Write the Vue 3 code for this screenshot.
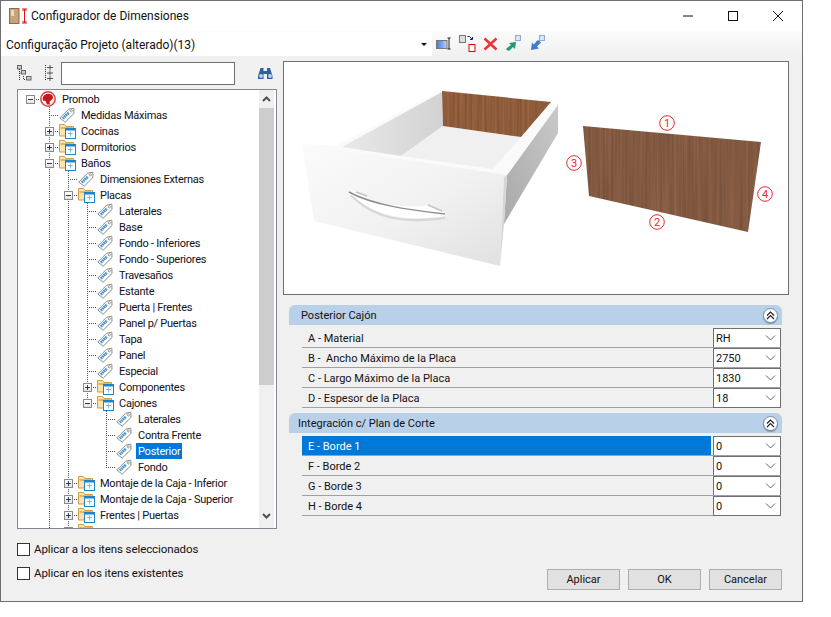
<template>
  <div class="window">
    <svg class="defs" width="0" height="0" aria-hidden="true">
      <defs>
        <symbol id="tag" viewBox="0 0 16 16">
          <path d="M.8 11 9.600 2.200 14.800 1.200l.2 5.200-8.800 8.800z" fill="#fff" stroke="#8b8b8b" />
          <path d="M3.800 11.600 10 5.400" stroke="#3a92d8" stroke-width="2.800" stroke-dasharray="1.600 .5" fill="none" />
          <circle cx="12.300" cy="3.800" r="1.100" fill="#fff" stroke="#777" stroke-width=".7" />
        </symbol>
        <symbol id="folder" viewBox="0 0 18 16">
          <path d="M.5 13V1.500h5l1.500 2h7.500V13z" fill="#fbe3ac" stroke="#cf9d4c" />
          <path d="M1.500 5h12" stroke="#e9b45f" stroke-width="2" />
          <rect x="6.500" y="5.500" width="10" height="10" fill="#fff" stroke="#1f83c6" />
          <path d="M6.500 6.500h10" stroke="#1f83c6" stroke-width="2" />
          <path d="M9 10.500h5M11.500 8.500v5" stroke="#8fb9d8" />
        </symbol>
      </defs>
    </svg>

    <header class="titlebar">
      <svg class="app-icon" width="22" height="18" viewBox="0 0 22 18">
        <rect x=".5" y="1.500" width="9.500" height="15" fill="#c6a378" stroke="#8b6a45" />
        <rect x="2" y="3" width="3" height="6" fill="#e7d8c2" />
        <path d="M15.500 2v14M13 2h5M13 16h5M13.500 4l2-2 2 2M13.500 14l2 2 2-2" stroke="#e0141e" fill="none" />
      </svg>
      <span class="titlebar__text">Configurador de Dimensiones</span>
      <div class="titlebar__controls">
        <svg width="12" height="12" viewBox="0 0 12 12"><path d="M1 6h10" stroke="#111" /></svg>
        <svg width="12" height="12" viewBox="0 0 12 12"><rect x="1.500" y="1.500" width="9" height="9" fill="none" stroke="#111" /></svg>
        <svg width="12" height="12" viewBox="0 0 12 12"><path d="M1 1l10 10M11 1 1 11" stroke="#111" /></svg>
      </div>
    </header>

    <div class="toolbar">
      <div class="combo">
        <span>Configuração Projeto (alterado)(13)</span>
        <i class="combo__arrow"></i>
      </div>
      <div class="toolbar__icons">
        <svg width="16" height="16" viewBox="0 0 16 16">
          <defs>
            <linearGradient id="tb-blue" x1="0" x2="1"><stop offset="0" stop-color="#3d78e0" /><stop offset="1" stop-color="#bcd2f4" /></linearGradient>
          </defs>
          <rect x=".5" y="4.500" width="10.500" height="8" fill="url(#tb-blue)" stroke="#777" />
          <path d="M11.500 2h3M11.500 13h3M13 2v11" stroke="#222" fill="none" />
        </svg>
        <svg width="17" height="18" viewBox="0 0 17 18">
          <rect x=".5" y=".5" width="6" height="7" fill="#ddd" stroke="#777" />
          <path d="M8.500 1.500h2l2.500 2.500M13.500 2v2.500H11" stroke="#14206e" fill="none" />
          <rect x="10" y="9.500" width="6" height="7" fill="#fff" stroke="#e60000" />
        </svg>
        <svg width="15" height="14" viewBox="0 0 15 14"><path d="M1.500 1.500l12 11M13.500 1.500l-12 11" stroke="#ea3438" stroke-width="2.600" /></svg>
        <svg width="17" height="17" viewBox="0 0 17 17">
          <rect x="10.500" y=".5" width="5" height="5" fill="#dbe6f6" stroke="#8fa9d6" />
          <path d="M1 14.500l3 1.500 4-4 2 2 1-7-7 1 2 2-4 3z" fill="#239a6d" />
        </svg>
        <svg width="17" height="17" viewBox="0 0 17 17">
          <rect x="10.500" y=".5" width="5" height="5" fill="#dbe6f6" stroke="#8fa9d6" />
          <path d="M10 5.500l2 2-4 4 2 2-8 1.500 1-7.500 2 2 3-4z" fill="#3d7cd0" />
        </svg>
      </div>
    </div>

    <main class="content">
      <section class="left">
        <div class="searchbar">
          <svg width="15" height="16" viewBox="0 0 15 16">
            <path d="M2.500 4v11M2.500 8H6M6.500 11v3.500h3" stroke="#333" stroke-dasharray="1 1" fill="none" />
            <rect x=".5" y=".5" width="4" height="3.500" fill="#ccc" stroke="#666" />
            <rect x="4.500" y="5.500" width="4" height="3.500" fill="#ccc" stroke="#666" />
            <rect x="9.500" y="11.500" width="4.500" height="3.500" fill="#ccc" stroke="#666" />
          </svg>
          <svg class="searchbar__flat" width="10" height="16" viewBox="0 0 10 16">
            <path d="M1.500 0v16" stroke="#333" stroke-dasharray="1 1" />
            <path d="M3 2.500h6M6 0v5M3 8h6M6 5.500v5M3 13.500h6M6 11v5" stroke="#555" />
          </svg>
          <input class="searchbar__input" type="text" />
          <svg class="searchbar__find" width="17" height="14" viewBox="0 0 17 14">
            <path d="M3.500 2h3v3h3.500V2h3l2.500 8v3h-5.500V8h-3.500v5H1v-3z" fill="#2f619f" />
            <circle cx="4" cy="10" r="2" fill="#b8d0ee" />
            <circle cx="13" cy="10" r="2" fill="#b8d0ee" />
          </svg>
        </div>

        <div class="tree">
          <ul class="tree__rows">
            <li v-for="row in rows" :key="row.key" class="tree__row">
              <span
                v-for="(on, i) in row.guides"
                :key="i"
                class="cell"
                :class="{ 'cell--guide': on }"
              ></span>
              <span class="cell" :class="row.connector">
                <i v-if="row.children" class="toggle" :class="{ 'toggle--plus': !row.open }"></i>
              </span>
              <span class="cell cell--icon">
                <svg v-if="row.icon === 'logo'" width="16" height="16" viewBox="0 0 16 16">
                  <circle cx="8" cy="8" r="7.200" fill="#fff" stroke="#e33b40" stroke-width="1.500" />
                  <path d="M2.500 7.500c.7-3.500 4.500-5.500 8-4.300 2.500.8 3 3 2 4.800-.8 1.300-2.500 1.700-3 3l.5 2.500H7L5.500 10 3 9.500z" fill="#c9161d" />
                </svg>
                <svg v-else-if="row.icon === 'folder'" class="icon-folder" width="18" height="16"><use href="#folder" /></svg>
                <svg v-else width="16" height="16"><use href="#tag" /></svg>
              </span>
              <span v-if="row.label" class="tree__label" :class="{ 'tree__label--selected': row.selected }">{{ row.label }}</span>
            </li>
          </ul>
          <div class="scroll">
            <svg width="15" height="18" viewBox="0 0 15 18"><path d="M4 11l3.500-3.500L11 11" stroke="#505050" stroke-width="2" fill="none" /></svg>
            <div class="scroll__thumb"></div>
            <svg class="scroll__down" width="15" height="18" viewBox="0 0 15 18"><path d="M4 7l3.500 3.500L11 7" stroke="#505050" stroke-width="2" fill="none" /></svg>
          </div>
        </div>

        <label class="check"><input type="checkbox" />Aplicar a los itens seleccionados</label>
        <label class="check check--second"><input type="checkbox" />Aplicar en los itens existentes</label>
      </section>

      <section class="right">
        <div class="preview">
          <svg width="504" height="232" viewBox="284 62 504 232">
            <defs>
              <filter id="wood-back" x="0" y="0" width="100%" height="100%" color-interpolation-filters="sRGB">
                <feTurbulence type="fractalNoise" baseFrequency="0.4 0.008" numOctaves="3" seed="4" />
                <feColorMatrix values="0.18 0 0 0 0.47  0.12 0 0 0 0.3  0.08 0 0 0 0.19  0 0 0 0 1" />
                <feComposite in2="SourceGraphic" operator="in" />
              </filter>
              <filter id="wood-panel" x="0" y="0" width="100%" height="100%" color-interpolation-filters="sRGB">
                <feTurbulence type="fractalNoise" baseFrequency="0.35 0.006" numOctaves="3" seed="9" />
                <feColorMatrix values="0.16 0 0 0 0.43  0.12 0 0 0 0.29  0.09 0 0 0 0.21  0 0 0 0 1" />
                <feComposite in2="SourceGraphic" operator="in" />
              </filter>
              <linearGradient id="front" x1="0" x2="1" y1="0" y2="1">
                <stop offset="0" stop-color="#fbfbfb" />
                <stop offset=".55" stop-color="#f1f1f1" />
                <stop offset="1" stop-color="#e0e0e0" />
              </linearGradient>
              <linearGradient id="inner" x1="0" x2="1">
                <stop offset="0" stop-color="#e9e9e9" />
                <stop offset="1" stop-color="#d2d2d2" />
              </linearGradient>
              <linearGradient id="side" x1="0" x2="1" y1="1" y2="0">
                <stop offset="0" stop-color="#a9a9a9" />
                <stop offset="1" stop-color="#c9c9c9" />
              </linearGradient>
            </defs>

            <path d="M507 175 558 104V133L504 224z" fill="url(#side)" />
            <path d="M336 146 441 90 551 102 558 105 507 175 302 144z" fill="#fafafa" />
            <path d="M342 147 442 92 443 126 401 156z" fill="url(#inner)" />
            <path d="M443 126 521 137 493 169 401 156z" fill="#f0f0f0" />
            <path d="M442 91 551 102 521 137 443 126z" fill="#000" filter="url(#wood-back)" />
            <path d="M302 144 507 175 504 177 500 266 314 221z" fill="url(#front)" />
            <path d="M504 177 507 175 504 224 500 266z" fill="#d5d5d5" />

            <!-- handle: soft shadow, body, then the dark upper edge -->
            <path d="M351 195C376 221 410 223 445 218" stroke="#d8d8d8" stroke-width="2.500" fill="none" />
            <path d="M349 192 356 191 367 196 363 198C385 206 405 207 425 206L428 205 445 213 445 216C410 221 375 219 349 192z" fill="#fff" />
            <path d="M349 192C372 205 410 210 445 214" stroke="#8f8f8f" stroke-width="1.500" fill="none" />
            <path d="M356 192 367 196M428 205 442 211" stroke="#c4c4c4" stroke-width="1.500" />

            <path d="M583 126 761 142 748 232 589 196z" fill="#000" filter="url(#wood-panel)" />

            <g v-for="mark in marks" :key="mark.n">
              <circle :cx="mark.x" :cy="mark.y" r="7.300" fill="#fff" stroke="#ec2b30" />
              <text :x="mark.x" :y="mark.y + 4" class="mark">{{ mark.n }}</text>
            </g>
          </svg>
        </div>

        <div v-for="group in groups" :key="group.title" class="group">
          <div class="group__head">
            <span>{{ group.title }}</span>
            <button class="group__toggle" type="button">
              <svg width="9" height="9" viewBox="0 0 9 9"><path d="M1 4.500l3.500-3.500L8 4.500M1 8l3.500-3.500L8 8" stroke="#222" stroke-width="1.200" fill="none" /></svg>
            </button>
          </div>
          <div v-for="item in group.items" :key="item.label" class="prop">
            <span class="prop__label" :class="{ 'prop__label--selected': item.selected }">{{ item.label }}</span>
            <span class="prop__value">
              {{ item.value }}
              <svg width="11" height="6" viewBox="0 0 11 6"><path d="M1 .5l4.500 4.500L10 .5" stroke="#666" fill="none" /></svg>
            </span>
          </div>
        </div>

        <div class="actions">
          <button type="button">Aplicar</button>
          <button type="button">OK</button>
          <button type="button">Cancelar</button>
        </div>
      </section>
    </main>
  </div>
</template>

<script setup>
import { computed } from 'vue';

const leaf = (label, selected = false) => ({ label, selected });

const tree = [
  {
    label: 'Promob',
    icon: 'logo',
    open: true,
    children: [
      leaf('Medidas Máximas'),
      { label: 'Cocinas', children: [] },
      { label: 'Dormitorios', children: [] },
      {
        label: 'Baños',
        open: true,
        more: true, // has siblings further down, below the visible part of the list
        children: [
          leaf('Dimensiones Externas'),
          {
            label: 'Placas',
            open: true,
            children: [
              leaf('Laterales'),
              leaf('Base'),
              leaf('Fondo - Inferiores'),
              leaf('Fondo - Superiores'),
              leaf('Travesaños'),
              leaf('Estante'),
              leaf('Puerta | Frentes'),
              leaf('Panel p/ Puertas'),
              leaf('Tapa'),
              leaf('Panel'),
              leaf('Especial'),
              { label: 'Componentes', children: [] },
              {
                label: 'Cajones',
                open: true,
                children: [
                  leaf('Laterales'),
                  leaf('Contra Frente'),
                  leaf('Posterior', true),
                  leaf('Fondo'),
                ],
              },
            ],
          },
          { label: 'Montaje de la Caja - Inferior', children: [] },
          { label: 'Montaje de la Caja - Superior', children: [] },
          { label: 'Frentes | Puertas', children: [] },
          { label: '', children: [] }, // only the folder top shows above the list edge
        ],
      },
    ],
  },
];

// flatten the tree so every row knows which guide lines it has to draw
const flatten = (nodes, guides = [], prefix = '') =>
  nodes.flatMap((node, i) => {
    const last = i === nodes.length - 1 && !node.more;
    const key = `${prefix}/${i}`;
    const row = {
      ...node,
      key,
      guides,
      icon: node.icon ?? (node.children ? 'folder' : 'tag'),
      connector: guides.length === 0 ? 'cell--root' : last ? 'cell--end' : 'cell--tee',
    };
    const kids = node.open
      ? flatten(node.children, [...guides, guides.length > 0 && !last], key)
      : [];
    return [row, ...kids];
  });

const rows = computed(() => flatten(tree));

const marks = [
  { n: 1, x: 667, y: 123 },
  { n: 2, x: 657, y: 222 },
  { n: 3, x: 574, y: 163 },
  { n: 4, x: 765, y: 194 },
];

const groups = [
  {
    title: 'Posterior Cajón',
    items: [
      { label: 'A - Material', value: 'RH' },
      { label: 'B -  Ancho Máximo de la Placa', value: '2750' },
      { label: 'C - Largo Máximo de la Placa', value: '1830' },
      { label: 'D - Espesor de la Placa', value: '18' },
    ],
  },
  {
    title: 'Integración c/ Plan de Corte',
    items: [
      { label: 'E - Borde 1', value: '0', selected: true },
      { label: 'F - Borde 2', value: '0' },
      { label: 'G - Borde 3', value: '0' },
      { label: 'H - Borde 4', value: '0' },
    ],
  },
];
</script>

<style scoped>
.window {
  width: 803px;
  height: 602px;
  box-sizing: border-box;
  border: 1px solid #6f6f6f;
  background: #f0f0f0;
  display: flex;
  flex-direction: column;
  font-family: Roboto, 'Liberation Sans', sans-serif;
  font-size: 11px;
  color: #111;
  overflow: hidden;
}

.defs {
  position: absolute;
}

.titlebar {
  height: 30px;
  flex: none;
  background: #fff;
  display: flex;
  align-items: center;
  padding-left: 8px;
}

.titlebar__text {
  font-size: 12px;
}

.titlebar__controls {
  margin-left: auto;
  margin-right: 18px;
  display: flex;
  gap: 33px;
}

.toolbar {
  height: 25px;
  flex: none;
  display: flex;
  align-items: center;
  background: linear-gradient(180deg, #fbfbfb 0%, #f0f0f0 100%);
}

.combo {
  width: 431px;
  height: 24px;
  box-sizing: border-box;
  padding: 2px 5px 0;
  background: #fff;
  display: flex;
  align-items: center;
  justify-content: space-between;
  font-size: 12px;
}

.combo__arrow {
  width: 0;
  height: 0;
  border: 3px solid transparent;
  border-top: 3px solid #111;
  border-bottom: 0;
}

.toolbar__icons {
  margin-left: 4px;
  display: flex;
  align-items: center;
  gap: 7px;
}

.content {
  flex: 1;
  display: flex;
  min-height: 0;
}

.left {
  width: 276px;
  flex: none;
  box-sizing: border-box;
  padding: 5px 0 0 16px;
}

.searchbar {
  height: 24px;
  display: flex;
  align-items: center;
}

.searchbar__flat {
  margin-left: 12px;
}

.searchbar__input {
  width: 174px;
  height: 23px;
  box-sizing: border-box;
  margin-left: 7px;
  border: 1px solid #6f6f6f;
  background: #fff;
  outline: none;
}

.searchbar__find {
  margin-left: 22px;
}

.tree {
  height: 440px;
  box-sizing: border-box;
  margin-top: 4px;
  border: 1px solid #828790;
  background: #fff;
  display: flex;
  overflow: hidden;
}

.tree__rows {
  flex: 1;
  margin: 1px 0 0;
  padding: 0 0 0 3px;
  list-style: none;
  min-width: 0;
}

.tree__row {
  height: 16px;
  display: flex;
  align-items: center;
  white-space: nowrap;
}

.cell {
  width: 19px;
  height: 16px;
  flex: none;
  display: flex;
  align-items: center;
  justify-content: center;
  background-repeat: no-repeat;
}

.cell--guide {
  background-image: repeating-linear-gradient(180deg, #555 0 1px, transparent 1px 2px);
  background-size: 1px 16px;
  background-position: 9px 0;
}

.cell--tee {
  background-image:
    repeating-linear-gradient(180deg, #555 0 1px, transparent 1px 2px),
    repeating-linear-gradient(90deg, #555 0 1px, transparent 1px 2px);
  background-size: 1px 16px, 10px 1px;
  background-position: 9px 0, 9px 8px;
}

.cell--end {
  background-image:
    repeating-linear-gradient(180deg, #555 0 1px, transparent 1px 2px),
    repeating-linear-gradient(90deg, #555 0 1px, transparent 1px 2px);
  background-size: 1px 8px, 10px 1px;
  background-position: 9px 0, 9px 8px;
}

.cell--root {
  background-image: repeating-linear-gradient(90deg, #555 0 1px, transparent 1px 2px);
  background-size: 10px 1px;
  background-position: 9px 8px;
}

.cell--icon {
  justify-content: flex-start;
}

.icon-folder {
  overflow: visible;
}

.toggle {
  width: 9px;
  height: 9px;
  box-sizing: border-box;
  border: 1px solid #8a8a8a;
  background:
    linear-gradient(#2b3a55, #2b3a55) center / 5px 1px no-repeat,
    linear-gradient(180deg, #fff, #e2e2e2);
}

.toggle--plus {
  background:
    linear-gradient(#2b3a55, #2b3a55) center / 5px 1px no-repeat,
    linear-gradient(#2b3a55, #2b3a55) center / 1px 5px no-repeat,
    linear-gradient(180deg, #fff, #e2e2e2);
}

.tree__label {
  height: 16px;
  box-sizing: border-box;
  margin-left: 1px;
  padding: 1px 2px 0;
  line-height: 16px;
  letter-spacing: -0.25px;
  color: #101020;
  overflow: hidden;
}

.tree__label--selected {
  background: #0078d7;
  color: #fff;
}

.scroll {
  width: 15px;
  flex: none;
  margin-right: 2px;
  background: #f0f0f0;
  display: flex;
  flex-direction: column;
}

.scroll__thumb {
  height: 277px;
  background: #cdcdcd;
}

.scroll__down {
  margin-top: auto;
  margin-bottom: 3px;
}

.check {
  display: flex;
  align-items: center;
  height: 14px;
  margin-top: 13px;
  gap: 4px;
  font-size: 11.5px;
  letter-spacing: -0.1px;
}

.check--second {
  margin-top: 10px;
}

.check input {
  appearance: none;
  width: 13px;
  height: 13px;
  margin: 0;
  border: 1px solid #333;
  background: #fff;
}

.right {
  flex: 1;
  box-sizing: border-box;
  padding: 5px 13px 0 6px;
  display: flex;
  flex-direction: column;
}

.preview {
  width: 506px;
  height: 234px;
  box-sizing: border-box;
  border: 1px solid #6f6f6f;
  background: #fff;
}

.preview svg {
  display: block;
}

.mark {
  font-size: 11px;
  fill: #e9272c;
  text-anchor: middle;
}

.group {
  margin-top: 10px;
  margin-left: 6px;
}

.group + .group {
  margin-top: 5px;
}

.group__head {
  width: 493px;
  height: 20px;
  box-sizing: border-box;
  padding: 0 4px 0 12px;
  border-radius: 6px 6px 0 0;
  background: #b9d0e9;
  display: flex;
  align-items: center;
  justify-content: space-between;
}

.group + .group .group__head {
  padding-left: 9px;
}

.group__toggle {
  width: 15px;
  height: 15px;
  padding: 0;
  border: 1px solid #7f8fa5;
  border-radius: 50%;
  background: #fff;
  box-shadow: 0 1px 1px rgba(60, 80, 110, 0.5);
  display: flex;
  align-items: center;
  justify-content: center;
}

.prop {
  width: 479px;
  height: 20px;
  margin-left: 13px;
  display: flex;
  box-sizing: border-box;
  border-bottom: 1px solid #a0a0a0;
}

.group__head + .prop {
  margin-top: 3px;
}

.prop__label {
  width: 409px;
  height: 19px;
  padding-left: 6px;
  box-sizing: border-box;
  line-height: 21px;
  white-space: pre;
}

.prop__label--selected {
  background: #0078d7;
  color: #fff;
}

.prop__value {
  margin-left: auto;
  width: 68px;
  box-sizing: border-box;
  padding: 0 4px 0 2px;
  border: 1px solid #6f6f6f;
  border-bottom: 0;
  background: #fff;
  display: flex;
  align-items: center;
  justify-content: space-between;
}

.prop:last-child .prop__value {
  border-bottom: 1px solid #6f6f6f;
  margin-bottom: -1px;
}

.actions {
  margin-top: auto;
  margin-bottom: 11px;
  margin-left: 6px;
  width: 493px;
  display: flex;
  justify-content: flex-end;
  gap: 8px;
}

.actions button {
  width: 73px;
  height: 21px;
  padding: 0;
  border: 1px solid #adadad;
  background: #e1e1e1;
  font: inherit;
  color: #111;
}
</style>

<style>
body {
  background: #fff;
}
</style>
